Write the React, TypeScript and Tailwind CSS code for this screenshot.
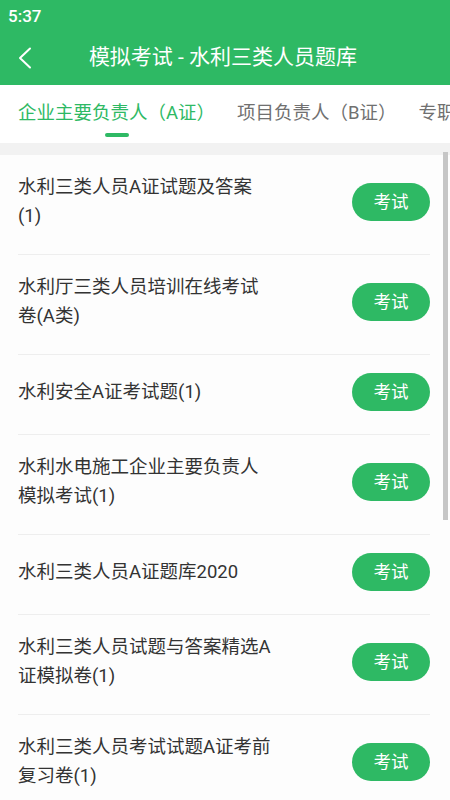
const GREEN = 'bg-[#2eb964]'

const papers: string[][] = [
  ['水利三类人员A证试题及答案', '(1)'],
  ['水利厅三类人员培训在线考试', '卷(A类)'],
  ['水利安全A证考试题(1)'],
  ['水利水电施工企业主要负责人', '模拟考试(1)'],
  ['水利三类人员A证题库2020'],
  ['水利三类人员试题与答案精选A', '证模拟卷(1)'],
  ['水利三类人员考试试题A证考前', '复习卷(1)'],
]

const tabs = ['企业主要负责人（A证）', '项目负责人（B证）', '专职安全生产管理人员（C证）']

function BackIcon() {
  return (
    <svg width="16" height="22" viewBox="0 0 16 22" fill="none">
      <path d="M13 1.5 3 11l10 9.5" stroke="white" strokeWidth="2" strokeLinecap="round" strokeLinejoin="round" />
    </svg>
  )
}

function PaperRow({ lines }: { lines: string[] }) {
  return (
    <div className="ml-[18px] mr-[20px] flex items-center justify-between border-b border-[#eeeeee] pt-[18px] pb-[23px]">
      <div className="text-[18.5px] leading-[29px] text-[#333333]">
        {lines.map((line) => (
          <div key={line}>{line}</div>
        ))}
      </div>
      <button className={`flex h-[38px] w-[78px] shrink-0 items-center justify-center rounded-full ${GREEN} text-[17.5px] text-white`}>
        考试
      </button>
    </div>
  )
}

export default function App() {
  return (
    <div
      className="relative h-[800px] w-[450px] overflow-hidden bg-white"
      style={{ fontFamily: 'Roboto, "Noto Sans CJK SC", sans-serif' }}
    >
      <div className={GREEN}>
        <div className="h-[30px] pl-[8px] pt-[6px] text-[17px] font-medium leading-[20px] text-white">5:37</div>
        <div className="grid h-[55px] grid-cols-[46px_1fr_50px] items-center">
          <div className="flex items-center pl-[17px]">
            <BackIcon />
          </div>
          <div className="text-center text-[21px] text-white">模拟考试 - 水利三类人员题库</div>
          <div />
        </div>
      </div>

      <div className="flex h-[58px] gap-[22px] overflow-hidden whitespace-nowrap bg-white pl-[18px]">
        {tabs.map((tab, i) => (
          <div key={tab} className="relative flex shrink-0 items-center text-[18.5px]">
            <span className={i === 0 ? 'text-[#2eb964]' : 'text-[#707070]'}>{tab}</span>
            {i === 0 ? (
              <span className={`absolute bottom-[6px] left-[87px] h-[4px] w-[24px] rounded-full ${GREEN}`} />
            ) : null}
          </div>
        ))}
      </div>

      <div className="h-[12px] bg-[#f2f2f2]" />

      <div className="bg-[#fdfdfd]">
        {papers.map((lines) => (
          <PaperRow key={lines.join('')} lines={lines} />
        ))}
      </div>

      <div className="absolute right-[2px] top-[152px] h-[368px] w-[5px] bg-[#c6c6c6]" />
    </div>
  )
}
